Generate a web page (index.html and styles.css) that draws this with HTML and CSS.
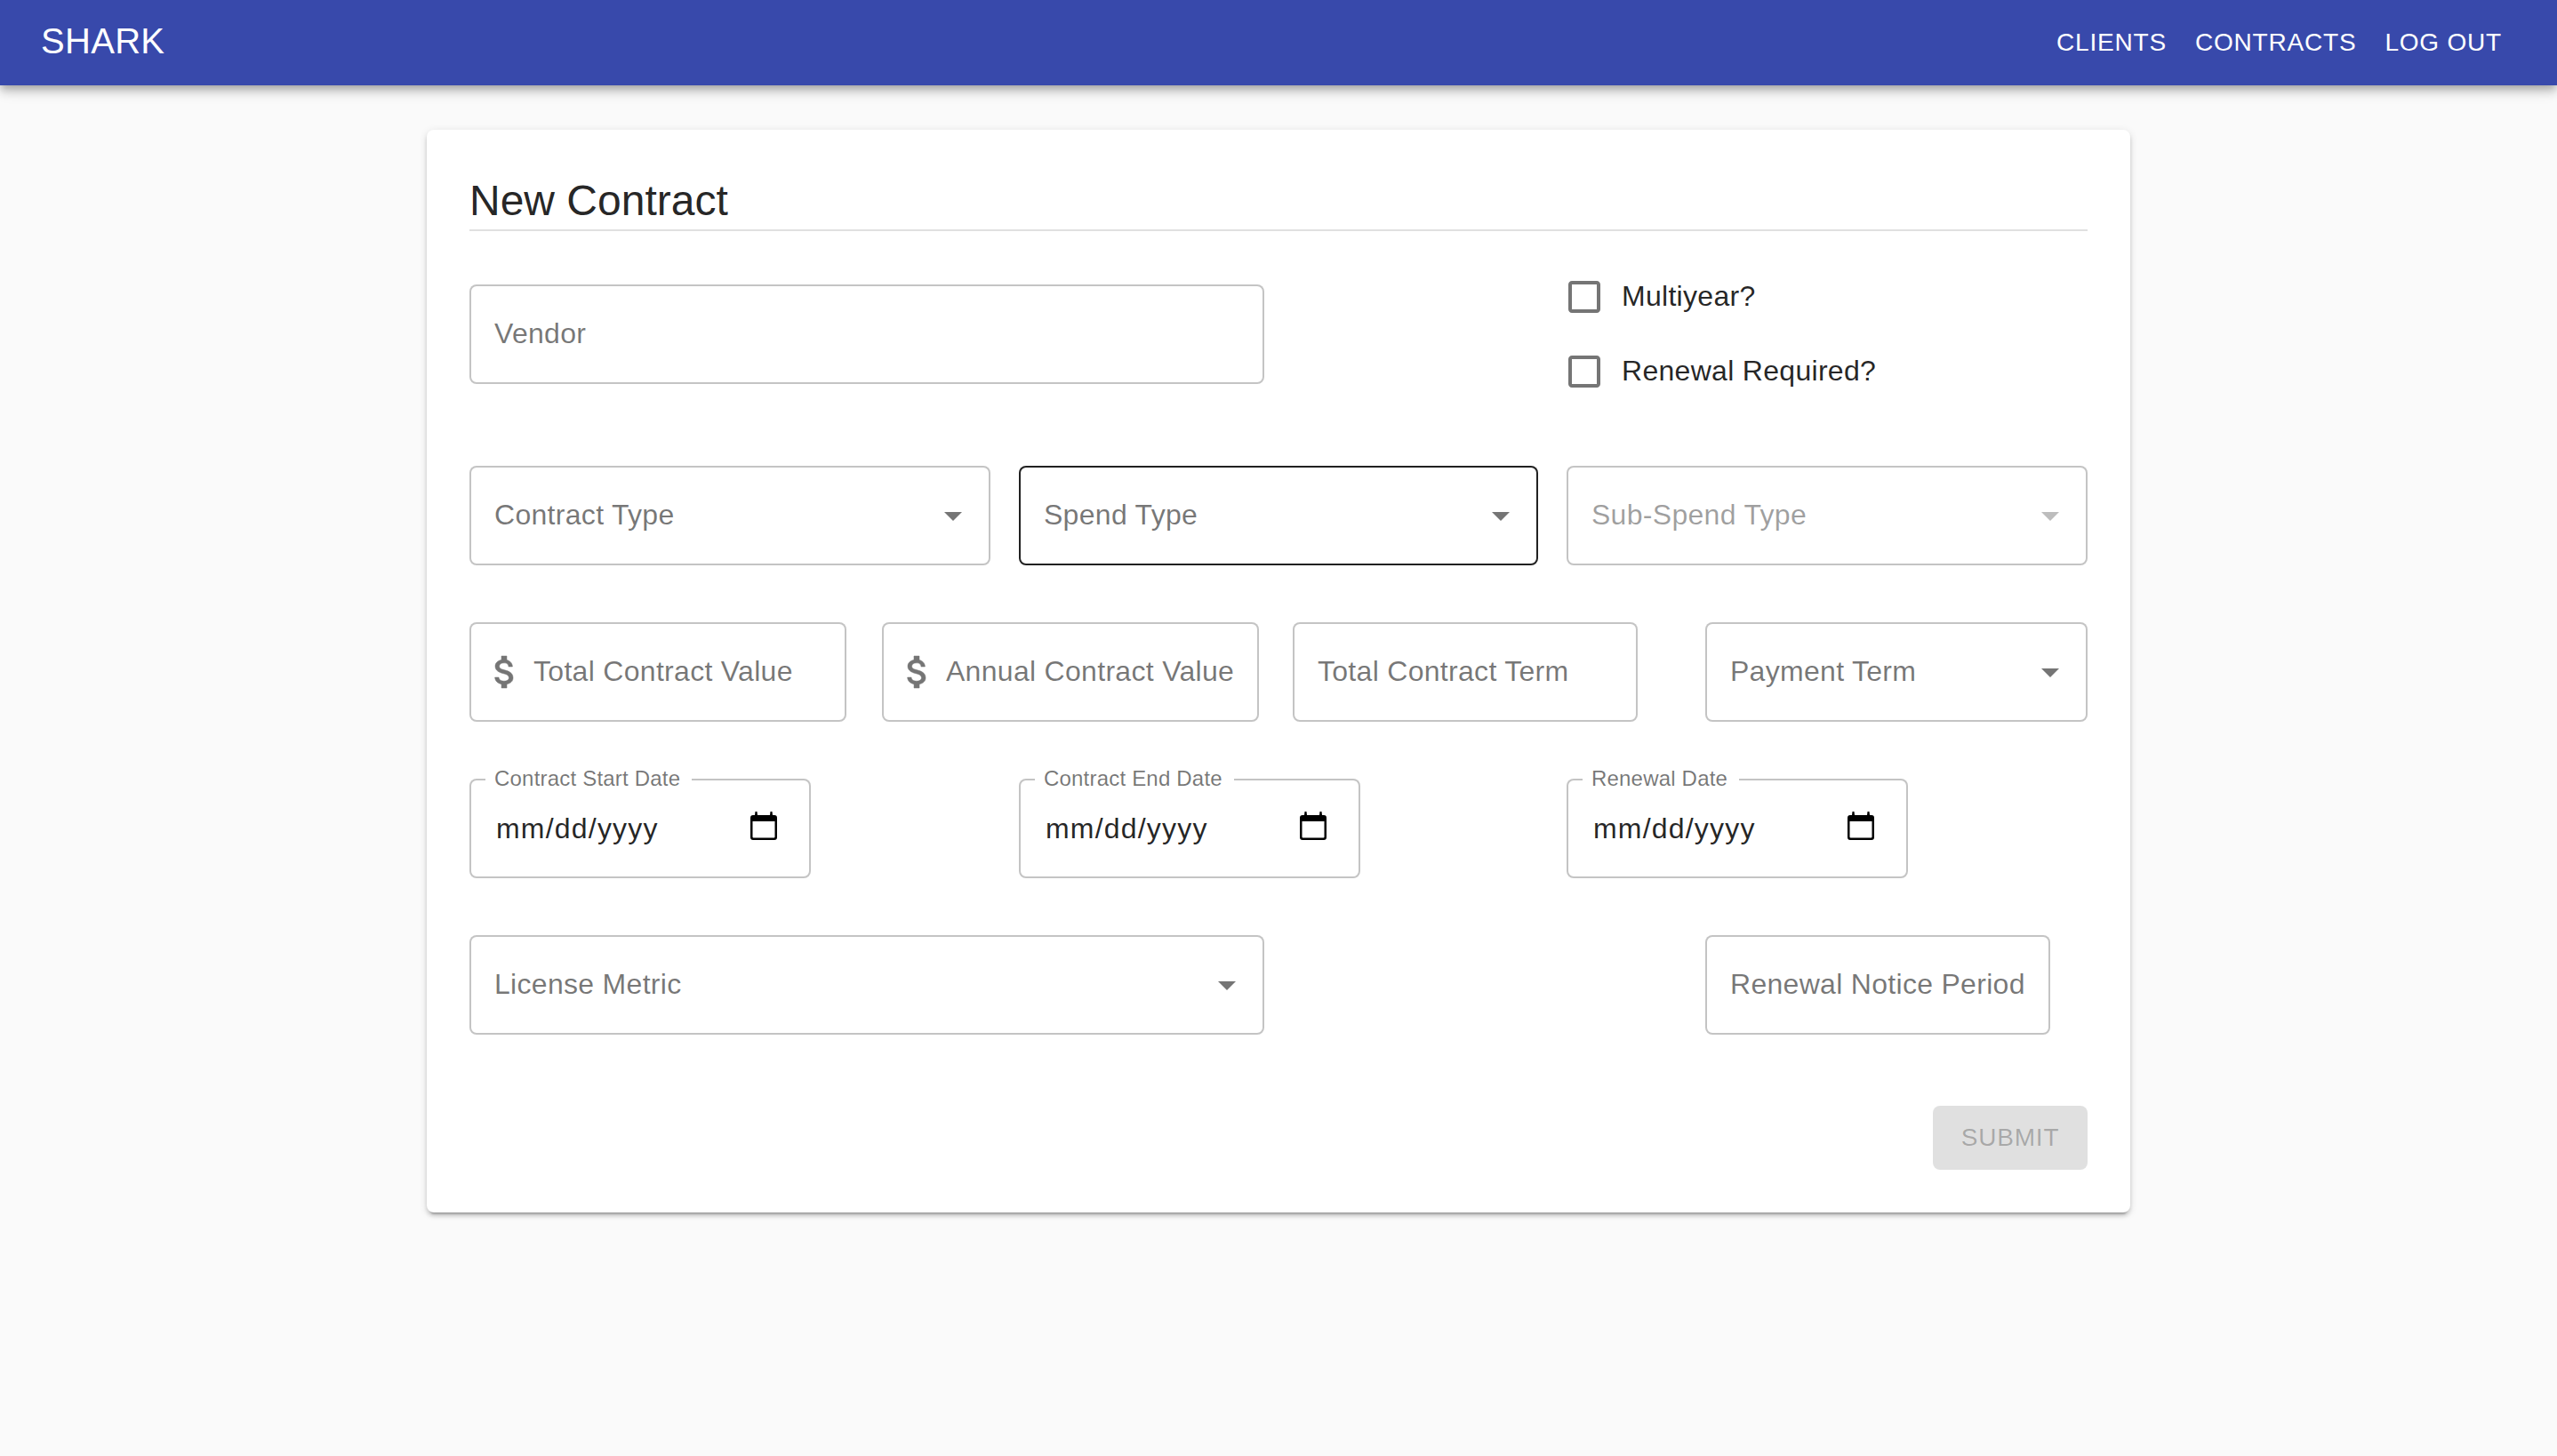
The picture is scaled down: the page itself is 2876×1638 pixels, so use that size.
FILE: index.html
```html
<!DOCTYPE html>
<html lang="en">
<head>
<meta charset="utf-8">
<title>Shark</title>
<link rel="stylesheet" href="styles.css">
</head>
<body>
<header class="appbar">
  <div class="brand">SHARK</div>
  <nav class="nav">
    <a class="nav-link">CLIENTS</a>
    <a class="nav-link">CONTRACTS</a>
    <a class="nav-link">LOG OUT</a>
  </nav>
</header>
<main class="card">
  <h1 class="title">New Contract</h1>
  <form class="form-grid">
    <div class="field span-6 field-offset"><span class="label">Vendor</span></div>
    <div class="checks start-9 span-4">
      <label class="check">
        <svg class="check-icon" viewBox="0 0 24 24"><path d="M19 5v14H5V5h14m0-2H5c-1.1 0-2 .9-2 2v14c0 1.1.9 2 2 2h14c1.1 0 2-.9 2-2V5c0-1.1-.9-2-2-2z"/></svg>
        <span class="check-text">Multiyear?</span>
      </label>
      <label class="check">
        <svg class="check-icon" viewBox="0 0 24 24"><path d="M19 5v14H5V5h14m0-2H5c-1.1 0-2 .9-2 2v14c0 1.1.9 2 2 2h14c1.1 0 2-.9 2-2V5c0-1.1-.9-2-2-2z"/></svg>
        <span class="check-text">Renewal Required?</span>
      </label>
    </div>

    <div class="field span-4 select"><span class="label">Contract Type</span><svg class="arrow" viewBox="0 0 24 24"><path d="M7 10l5 5 5-5z"/></svg></div>
    <div class="field span-4 select active"><span class="label">Spend Type</span><svg class="arrow" viewBox="0 0 24 24"><path d="M7 10l5 5 5-5z"/></svg></div>
    <div class="field span-4 select disabled"><span class="label">Sub-Spend Type</span><svg class="arrow" viewBox="0 0 24 24"><path d="M7 10l5 5 5-5z"/></svg></div>

    <div class="field span-3 w-money"><svg class="money" viewBox="6 3 12 18"><path d="M11.8 10.9c-2.27-.59-3-1.2-3-2.15 0-1.09 1.01-1.85 2.7-1.85 1.78 0 2.44.85 2.5 2.1h2.21c-.07-1.72-1.12-3.3-3.21-3.81V3h-3v2.16c-1.94.42-3.5 1.68-3.5 3.61 0 2.31 1.91 3.46 4.7 4.13 2.5.6 3 1.48 3 2.41 0 .69-.49 1.79-2.7 1.79-2.06 0-2.87-.92-2.98-2.1h-2.2c.12 2.19 1.76 3.42 3.7 3.83V21h3v-2.15c1.95-.37 3.5-1.5 3.5-3.55 0-2.84-2.43-3.81-4.7-4.4z"/></svg><span class="label">Total Contract Value</span></div>
    <div class="field span-3 w-money"><svg class="money" viewBox="6 3 12 18"><path d="M11.8 10.9c-2.27-.59-3-1.2-3-2.15 0-1.09 1.01-1.85 2.7-1.85 1.78 0 2.44.85 2.5 2.1h2.21c-.07-1.72-1.12-3.3-3.21-3.81V3h-3v2.16c-1.94.42-3.5 1.68-3.5 3.61 0 2.31 1.91 3.46 4.7 4.13 2.5.6 3 1.48 3 2.41 0 .69-.49 1.79-2.7 1.79-2.06 0-2.87-.92-2.98-2.1h-2.2c.12 2.19 1.76 3.42 3.7 3.83V21h3v-2.15c1.95-.37 3.5-1.5 3.5-3.55 0-2.84-2.43-3.81-4.7-4.4z"/></svg><span class="label">Annual Contract Value</span></div>
    <div class="field span-3 w-term"><span class="label">Total Contract Term</span></div>
    <div class="field span-3 select"><span class="label">Payment Term</span><svg class="arrow" viewBox="0 0 24 24"><path d="M7 10l5 5 5-5z"/></svg></div>

    <div class="field span-4 date"><span class="legend">Contract Start Date</span><span class="date-value">mm/dd/yyyy</span><svg class="calendar" viewBox="0 0 30 32"><path fill-rule="evenodd" d="M5.5 0h2l.5 4h14l.5-4h2l.5 4h2a3 3 0 0 1 3 3v22a3 3 0 0 1-3 3H3a3 3 0 0 1-3-3V7a3 3 0 0 1 3-3h2zM2.5 11v17.5a1 1 0 0 0 1 1h23a1 1 0 0 0 1-1V11z"/></svg></div>
    <div class="field span-4 date"><span class="legend">Contract End Date</span><span class="date-value">mm/dd/yyyy</span><svg class="calendar" viewBox="0 0 30 32"><path fill-rule="evenodd" d="M5.5 0h2l.5 4h14l.5-4h2l.5 4h2a3 3 0 0 1 3 3v22a3 3 0 0 1-3 3H3a3 3 0 0 1-3-3V7a3 3 0 0 1 3-3h2zM2.5 11v17.5a1 1 0 0 0 1 1h23a1 1 0 0 0 1-1V11z"/></svg></div>
    <div class="field span-4 date"><span class="legend">Renewal Date</span><span class="date-value">mm/dd/yyyy</span><svg class="calendar" viewBox="0 0 30 32"><path fill-rule="evenodd" d="M5.5 0h2l.5 4h14l.5-4h2l.5 4h2a3 3 0 0 1 3 3v22a3 3 0 0 1-3 3H3a3 3 0 0 1-3-3V7a3 3 0 0 1 3-3h2zM2.5 11v17.5a1 1 0 0 0 1 1h23a1 1 0 0 0 1-1V11z"/></svg></div>

    <div class="field span-6 select"><span class="label">License Metric</span><svg class="arrow" viewBox="0 0 24 24"><path d="M7 10l5 5 5-5z"/></svg></div>
    <div class="field start-10 span-3 w-term"><span class="label">Renewal Notice Period</span></div>
  </form>
  <div class="actions"><button class="submit" type="button" disabled>SUBMIT</button></div>
</main>
</body>
</html>
```
FILE: styles.css
```css
* { box-sizing: border-box; }
html, body { margin: 0; }
body {
  min-height: 1638px;
  background: #fafafa;
  color: rgba(0, 0, 0, .87);
  font-family: "Liberation Sans", Arial, sans-serif;
  font-size: 32px;
  letter-spacing: .3px;
}
.appbar {
  height: 96px;
  padding: 0 46px;
  display: flex;
  align-items: center;
  justify-content: space-between;
  background: #3849ab;
  color: #fff;
  box-shadow: 0 4px 8px -2px rgba(0,0,0,.2), 0 8px 10px 0 rgba(0,0,0,.14), 0 2px 20px 0 rgba(0,0,0,.12);
}
.brand { font-size: 40px; line-height: 1.6; padding-bottom: 4px; }
.nav { display: flex; padding-bottom: 2px; }
.nav-link {
  padding: 12px 16px;
  font-size: 28px;
  line-height: 1.75;
  letter-spacing: .8px;
}
.card {
  width: 1916px;
  margin: 50px auto 0;
  padding: 48px;
  background: #fff;
  border-radius: 8px;
  box-shadow: 0 6px 2px -4px rgba(0,0,0,.2), 0 4px 4px 0 rgba(0,0,0,.14), 0 2px 10px 0 rgba(0,0,0,.12);
}
.title {
  margin: 0 0 32px;
  font-size: 48px;
  font-weight: 400;
  line-height: 64px;
  letter-spacing: 0;
  border-bottom: 2px solid #e0e0e0;
}
.form-grid {
  display: grid;
  grid-template-columns: repeat(3, 122.67px) repeat(5, 122px) 124px repeat(3, 122px);
  column-gap: 32px;
  row-gap: 64px;
}
.span-3 { grid-column-end: span 3; }
.span-4 { grid-column-end: span 4; }
.span-6 { grid-column-end: span 6; }
.start-9 { grid-column-start: 9; }
.start-10 { grid-column-start: 10; }
.field {
  position: relative;
  height: 112px;
  padding: 0 26px;
  display: flex;
  align-items: center;
  border: 2px solid rgba(0,0,0,.23);
  border-radius: 8px;
  background: #fff;
}
.field-offset { margin-top: 28px; }
.label { color: rgba(0,0,0,.54); white-space: nowrap; margin-bottom: 2px; }
.select { justify-content: space-between; padding-right: 16px; }
.arrow { width: 48px; height: 48px; fill: rgba(0,0,0,.54); }
.active { border-color: rgba(0,0,0,.87); }
.disabled .label { color: rgba(0,0,0,.38); }
.disabled .arrow { fill: rgba(0,0,0,.26); }
.w-money { width: 424px; }
.w-term { width: 388px; }
.money { width: 24px; height: 36px; margin-right: 20px; flex: none; fill: #757575; stroke: #757575; stroke-width: .25; overflow: visible; }
.date { width: 384px; justify-content: space-between; padding-left: 28px; padding-right: 36px; }
.date-value { letter-spacing: 1.2px; white-space: nowrap; }
.calendar { width: 30px; height: 32px; margin-bottom: 6px; fill: #000; }
.legend {
  position: absolute;
  left: 16px;
  top: -16px;
  padding: 0 13px 0 10px;
  background: #fff;
  color: rgba(0,0,0,.54);
  font-size: 24px;
  line-height: 28px;
  letter-spacing: .2px;
  white-space: nowrap;
}
.checks { display: flex; flex-direction: column; margin-left: -22px; }
.check { display: flex; align-items: center; height: 84px; }
.check-text { margin-bottom: 2px; }
.check-icon { width: 48px; height: 48px; margin: 0 18px; fill: rgba(0,0,0,.54); }
.actions { display: flex; justify-content: flex-end; margin-top: 80px; }
.submit {
  width: 174px;
  height: 72px;
  padding: 0;
  border: 0;
  border-radius: 8px;
  background: rgba(0,0,0,.12);
  color: rgba(0,0,0,.26);
  font-family: inherit;
  font-size: 28px;
  letter-spacing: .8px;
}
```
